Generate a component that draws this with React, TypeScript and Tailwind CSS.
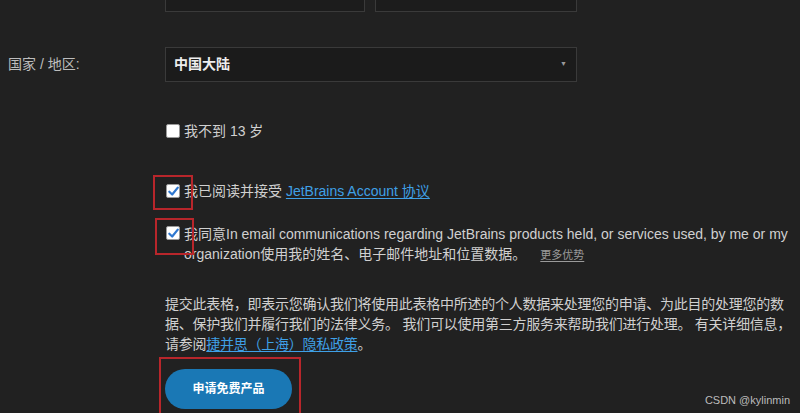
const FONT = "font-['Liberation_Sans','Noto_Sans_CJK_SC',sans-serif]";

function Check({ checked }: { checked?: boolean }) {
  return (
    <span className="grid h-[14px] w-[14px] shrink-0 place-items-center rounded-[2px] border border-[#9a9a9a] bg-white">
      {checked && (
        <svg viewBox="0 0 14 14" className="h-[13px] w-[13px]">
          <path d="M2.5 7.2 L5.6 10.2 L11.6 2.8" fill="none" stroke="#2f78d0" strokeWidth="2.4" strokeLinecap="round" strokeLinejoin="round" />
        </svg>
      )}
    </span>
  );
}

export default function App() {
  return (
    <div className={`relative h-[413px] w-[800px] overflow-hidden bg-[#212121] text-[14px] text-[#d0d0d0] ${FONT}`}>
      {/* name inputs, cut off at the top */}
      <div className="-mt-[28px] flex gap-[10px] pl-[165px]">
        <div className="h-[40px] w-[200px] border border-[#3a3a3a] bg-[#1c1c1c]" />
        <div className="h-[40px] w-[202px] border border-[#3a3a3a] bg-[#1c1c1c]" />
      </div>

      {/* country */}
      <div className="mt-[35px] flex items-center">
        <div className="w-[165px] pl-[8px] text-[#bdbdbd]">国家 / 地区:</div>
        <div className="flex h-[35px] w-[412px] items-center justify-between border border-[#3a3a3a] bg-[#1b1b1b] pl-[8px] pr-[9px]">
          <span className="font-bold text-[#ededed]">中国大陆</span>
          <span className="text-[7px] text-[#9a9a9a]">▼</span>
        </div>
      </div>

      {/* under 13 */}
      <div className="mt-[39px] flex h-[20px] items-center gap-[4px] pl-[166px]">
        <Check />
        <span>我不到 13 岁</span>
      </div>

      {/* account agreement */}
      <div className="mt-[40px] flex h-[20px] items-center gap-[4px] pl-[166px]">
        <span className="relative">
          <Check checked />
          <span className="absolute -left-[13px] -top-[9px] h-[35px] w-[40px] border-2 border-[#b8262b]" />
        </span>
        <span>
          我已阅读并接受{" "}
          <span className="text-[#3fa0e6] underline underline-offset-2">JetBrains Account 协议</span>
        </span>
      </div>

      {/* email consent */}
      <div className="mt-[23px] flex gap-[4px] pl-[166px]">
        <span className="relative mt-[2px] h-[14px]">
          <Check checked />
          <span className="absolute -left-[11px] -top-[8px] h-[37px] w-[39px] border-2 border-[#b8262b]" />
        </span>
        <p className="leading-[20px]">
          我同意In email communications regarding JetBrains products held, or services used, by me or my
          <br />
          organization使用我的姓名、电子邮件地址和位置数据。
          <span className="ml-[14px] text-[11px] text-[#9a9a9a] underline underline-offset-2">更多优势</span>
        </p>
      </div>

      {/* privacy note */}
      <p className="mt-[29px] ml-[165px] w-[630px] whitespace-nowrap leading-[20px] tracking-[-0.25px]">
        提交此表格，即表示您确认我们将使用此表格中所述的个人数据来处理您的申请、为此目的处理您的数
        <br />
        据、保护我们并履行我们的法律义务。 我们可以使用第三方服务来帮助我们进行处理。 有关详细信息，
        <br />
        请参阅<span className="text-[#3fa0e6] underline underline-offset-2">捷并思（上海）隐私政策</span>。
      </p>

      {/* submit */}
      <div className="mt-[15px] pl-[165px]">
        <span className="relative inline-block">
          <button className="h-[40px] w-[127px] rounded-full bg-[#1a78b5] text-[12px] font-bold text-white">
            申请免费产品
          </button>
          <span className="absolute -left-[6px] -top-[12px] h-[62px] w-[142px] border-2 border-[#b8262b]" />
        </span>
      </div>

      <span className="absolute bottom-[5px] right-[10px] text-[11px] text-[#bcbcbc]">CSDN @kylinmin</span>
    </div>
  );
}
